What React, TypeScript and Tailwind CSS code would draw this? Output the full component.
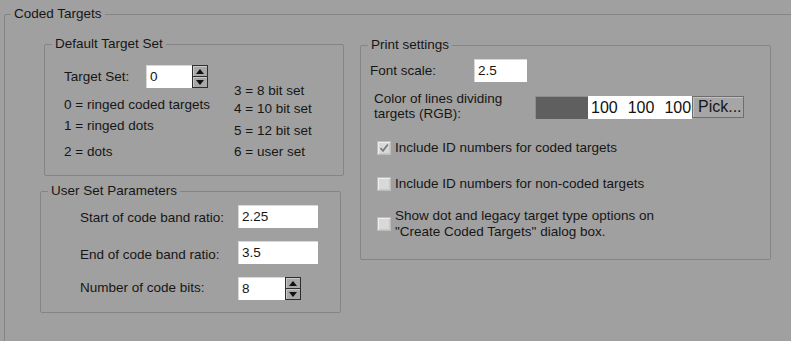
import React from "react";

function Spinner() {
  return (
    <div className="w-[16px] h-[23px] flex flex-col border border-[#2e2e2e] bg-[#a8a8a8]">
      <div className="flex-1 flex items-center justify-center border-b border-[#2e2e2e] shadow-[inset_1px_1px_0_#c8c8c8]">
        <svg width="8" height="5" viewBox="0 0 8 5">
          <path d="M4 0 L8 5 L0 5 Z" fill="#111" />
        </svg>
      </div>
      <div className="flex-1 flex items-center justify-center shadow-[inset_1px_1px_0_#c8c8c8]">
        <svg width="8" height="5" viewBox="0 0 8 5">
          <path d="M0 0 L8 0 L4 5 Z" fill="#111" />
        </svg>
      </div>
    </div>
  );
}

function Field({ value, w }: { value: string; w: string }) {
  return (
    <div
      className="h-[23px] bg-white pl-[3px] flex items-center border-t border-l border-[#d8d8d8]"
      style={{ width: w }}
    >
      {value}
    </div>
  );
}

function Check({ checked }: { checked?: boolean }) {
  return (
    <div className="w-[14px] h-[14px] shrink-0 border border-[#bdbdbd] bg-[#d9d9d9] shadow-[inset_1px_1px_0_#efefef,inset_-1px_-1px_0_#c9c9c9] flex items-center justify-center">
      {checked ? (
        <svg width="10" height="10" viewBox="0 0 10 10">
          <path d="M1.5 5 L4 7.8 L8.8 1.5" stroke="#7a7a7a" strokeWidth="1.8" fill="none" />
        </svg>
      ) : null}
    </div>
  );
}

export default function App() {
  return (
    <div className="w-[791px] h-[341px] overflow-hidden bg-[#a0a0a0] pl-[4px] pt-[6px] font-['Liberation_Sans',Arial,sans-serif] text-[13.5px] leading-[16px] text-[#161616]">
      <fieldset className="w-[820px] h-[360px] border border-[#858585] rounded-[2px]">
        <legend className="ml-[6px] px-[3px]">Coded Targets</legend>
        <div className="flex mt-[14px]">
          <div className="flex flex-col pl-[35px]">
            <fieldset className="ml-[4px] w-[300px] border border-[#858585] rounded-[2px]">
              <legend className="ml-[7px] px-[3px]">Default Target Set</legend>
              <div className="flex pl-[19px] pt-[13px] pb-[15px]">
                <div className="w-[170px] flex flex-col">
                  <div className="flex items-center h-[23px]">
                    <span className="w-[82px]">Target Set:</span>
                    <Field value="0" w="46px" />
                    <Spinner />
                  </div>
                  <div className="mt-[9px]">0 = ringed coded targets</div>
                  <div className="mt-[5px]">1 = ringed dots</div>
                  <div className="mt-[10px]">2 = dots</div>
                </div>
                <div className="flex flex-col pt-[18px]">
                  <div>3 = 8 bit set</div>
                  <div className="mt-[2px]">4 = 10 bit set</div>
                  <div className="mt-[6px]">5 = 12 bit set</div>
                  <div className="mt-[5px]">6 = user set</div>
                </div>
              </div>
            </fieldset>
            <fieldset className="mt-[7px] w-[301px] border border-[#858585] rounded-[2px]">
              <legend className="ml-[7px] px-[3px]">User Set Parameters</legend>
              <div className="flex flex-col pl-[39px] pt-[6px] pb-[12px]">
                <div className="flex items-start h-[23px]">
                  <span className="w-[158px] pt-[5px]">Start of code band ratio:</span>
                  <Field value="2.25" w="80px" />
                </div>
                <div className="flex items-start h-[23px] mt-[13px]">
                  <span className="w-[158px] pt-[6px]">End of code band ratio:</span>
                  <Field value="3.5" w="80px" />
                </div>
                <div className="flex items-start h-[23px] mt-[13px]">
                  <span className="w-[158px] pt-[3px]">Number of code bits:</span>
                  <Field value="8" w="47px" />
                  <Spinner />
                </div>
              </div>
            </fieldset>
          </div>
          <fieldset className="ml-[16px] mt-[1px] w-[411px] self-start border border-[#858585] rounded-[2px]">
            <legend className="ml-[7px] px-[3px]">Print settings</legend>
            <div className="flex flex-col pb-[19px]">
              <div className="flex items-center h-[23px] mt-[6px] pl-[9px]">
                <span className="w-[104px]">Font scale:</span>
                <Field value="2.5" w="53px" />
              </div>
              <div className="flex items-start mt-[9px] pl-[13px]">
                <div className="w-[161px] leading-[15px]">
                  Color of lines dividing
                  <br />
                  targets (RGB):
                </div>
                <div className="flex h-[23px] mt-[5px] text-[16px]">
                  <div className="w-[53px] bg-[#5f5f5f] border-t border-l border-[#8e8e8e]" />
                  <div className="w-[104px] bg-white flex items-center pl-[3px] gap-[10px] text-[#111]">
                    <span>100</span>
                    <span>100</span>
                    <span>100</span>
                  </div>
                  <div className="w-[52px] h-[22px] bg-[#a6a6a6] border border-[#6e6e6e] flex items-center pl-[5px] shadow-[inset_1px_1px_0_#c0c0c0]">
                    Pick...
                  </div>
                </div>
              </div>
              <div className="flex items-center gap-[4px] mt-[19px] pl-[16px]">
                <Check checked />
                <span>Include ID numbers for coded targets</span>
              </div>
              <div className="flex items-center gap-[4px] mt-[20px] pl-[16px]">
                <Check />
                <span>Include ID numbers for non-coded targets</span>
              </div>
              <div className="flex items-center gap-[4px] mt-[16px] pl-[16px]">
                <Check />
                <span>
                  Show dot and legacy target type options on
                  <br />
                  "Create Coded Targets" dialog box.
                </span>
              </div>
            </div>
          </fieldset>
        </div>
      </fieldset>
    </div>
  );
}
